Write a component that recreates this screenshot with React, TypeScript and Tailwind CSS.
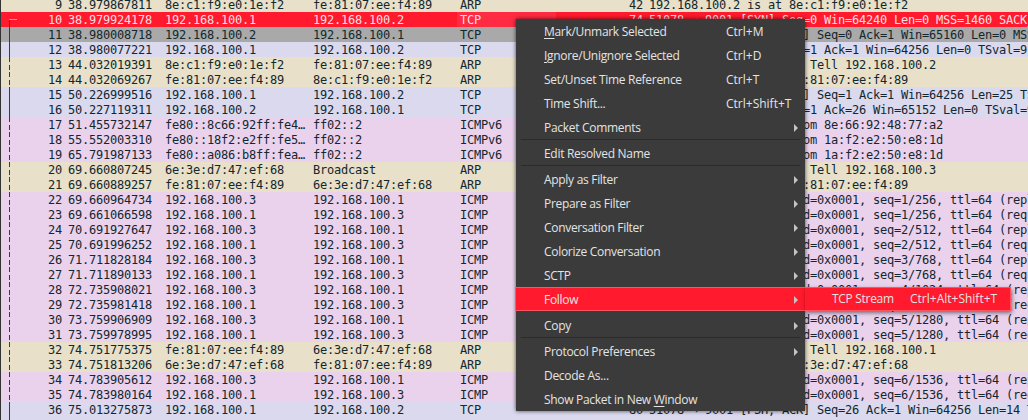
import React from "react";

type Kind = "arp" | "tcp" | "icmp" | "sel" | "gray";
type Packet = [Kind, string, string, string, string, string, string, string];

const packets: Packet[] = [
  ["arp", "9", "38.979867811", "8e:c1:f9:e0:1e:f2", "fe:81:07:ee:f4:89", "ARP", "42", "192.168.100.2 is at 8e:c1:f9:e0:1e:f2"],
  ["sel", "10", "38.979924178", "192.168.100.1", "192.168.100.2", "TCP", "74", "51078 → 9001 [SYN] Seq=0 Win=64240 Len=0 MSS=1460 SACK_PERM"],
  ["gray", "11", "38.980008718", "192.168.100.2", "192.168.100.1", "TCP", "74", "9001 → 51078 [SYN, ACK] Seq=0 Ack=1 Win=65160 Len=0 MSS=1460"],
  ["tcp", "12", "38.980077221", "192.168.100.1", "192.168.100.2", "TCP", "66", "51078 → 9001 [ACK] Seq=1 Ack=1 Win=64256 Len=0 TSval=9"],
  ["arp", "13", "44.032019391", "8e:c1:f9:e0:1e:f2", "fe:81:07:ee:f4:89", "ARP", "42", "Who has 192.168.100.1? Tell 192.168.100.2"],
  ["arp", "14", "44.032069267", "fe:81:07:ee:f4:89", "8e:c1:f9:e0:1e:f2", "ARP", "42", "192.168.100.1 is at fe:81:07:ee:f4:89"],
  ["tcp", "15", "50.226999516", "192.168.100.1", "192.168.100.2", "TCP", "91", "51078 → 9001 [PSH, ACK] Seq=1 Ack=1 Win=64256 Len=25 TSval=9"],
  ["tcp", "16", "50.227119311", "192.168.100.2", "192.168.100.1", "TCP", "66", "9001 → 51078 [ACK] Seq=1 Ack=26 Win=65152 Len=0 TSval=9"],
  ["icmp", "17", "51.455732147", "fe80::8c66:92ff:fe4…", "ff02::2", "ICMPv6", "70", "Router Solicitation from 8e:66:92:48:77:a2"],
  ["icmp", "18", "55.552003310", "fe80::18f2:e2ff:fe5…", "ff02::2", "ICMPv6", "70", "Router Solicitation from 1a:f2:e2:50:e8:1d"],
  ["icmp", "19", "65.791987133", "fe80::a086:b8ff:fea…", "ff02::2", "ICMPv6", "70", "Router Solicitation from 1a:f2:e2:50:e8:1d"],
  ["arp", "20", "69.660807245", "6e:3e:d7:47:ef:68", "Broadcast", "ARP", "42", "Who has 192.168.100.1? Tell 192.168.100.3"],
  ["arp", "21", "69.660889257", "fe:81:07:ee:f4:89", "6e:3e:d7:47:ef:68", "ARP", "42", "192.168.100.1 is at fe:81:07:ee:f4:89"],
  ["icmp", "22", "69.660964734", "192.168.100.3", "192.168.100.1", "ICMP", "98", "Echo (ping) request  id=0x0001, seq=1/256, ttl=64 (reply in 23)"],
  ["icmp", "23", "69.661066598", "192.168.100.1", "192.168.100.3", "ICMP", "98", "Echo (ping) reply    id=0x0001, seq=1/256, ttl=64 (request in 22)"],
  ["icmp", "24", "70.691927647", "192.168.100.3", "192.168.100.1", "ICMP", "98", "Echo (ping) request  id=0x0001, seq=2/512, ttl=64 (reply in 25)"],
  ["icmp", "25", "70.691996252", "192.168.100.1", "192.168.100.3", "ICMP", "98", "Echo (ping) reply    id=0x0001, seq=2/512, ttl=64 (request in 24)"],
  ["icmp", "26", "71.711828184", "192.168.100.3", "192.168.100.1", "ICMP", "98", "Echo (ping) request  id=0x0001, seq=3/768, ttl=64 (reply in 27)"],
  ["icmp", "27", "71.711890133", "192.168.100.1", "192.168.100.3", "ICMP", "98", "Echo (ping) reply    id=0x0001, seq=3/768, ttl=64 (request in 26)"],
  ["icmp", "28", "72.735908021", "192.168.100.3", "192.168.100.1", "ICMP", "98", "Echo (ping) request  id=0x0001, seq=4/1024, ttl=64 (reply in 29)"],
  ["icmp", "29", "72.735981418", "192.168.100.1", "192.168.100.3", "ICMP", "98", "Echo (ping) reply    id=0x0001, seq=4/1024, ttl=64 (request in 28)"],
  ["icmp", "30", "73.759906909", "192.168.100.3", "192.168.100.1", "ICMP", "98", "Echo (ping) request  id=0x0001, seq=5/1280, ttl=64 (reply in 31)"],
  ["icmp", "31", "73.759978995", "192.168.100.1", "192.168.100.3", "ICMP", "98", "Echo (ping) reply    id=0x0001, seq=5/1280, ttl=64 (request in 30)"],
  ["arp", "32", "74.751775375", "fe:81:07:ee:f4:89", "6e:3e:d7:47:ef:68", "ARP", "42", "Who has 192.168.100.3? Tell 192.168.100.1"],
  ["arp", "33", "74.751813206", "6e:3e:d7:47:ef:68", "fe:81:07:ee:f4:89", "ARP", "42", "192.168.100.3 is at 6e:3e:d7:47:ef:68"],
  ["icmp", "34", "74.783905612", "192.168.100.3", "192.168.100.1", "ICMP", "98", "Echo (ping) request  id=0x0001, seq=6/1536, ttl=64 (reply in 35)"],
  ["icmp", "35", "74.783980164", "192.168.100.1", "192.168.100.3", "ICMP", "98", "Echo (ping) reply    id=0x0001, seq=6/1536, ttl=64 (request in 34)"],
  ["tcp", "36", "75.013275873", "192.168.100.1", "192.168.100.2", "TCP", "80", "51078 → 9001 [PSH, ACK] Seq=26 Ack=1 Win=64256 Len=14 TSval=9"],
  ["tcp", "", "", "", "", "", "", ""],
];

const rowStyles: Record<Kind, string> = {
  arp: "bg-[#e8e0c9] text-[#12272e]",
  tcp: "bg-[#dad9ee] text-[#12272e]",
  icmp: "bg-[#ead2ed] text-[#12272e]",
  sel: "bg-[#ff1a2d] text-[#fbdfe0]",
  gray: "bg-[#a9a9a9] text-[#12272e]",
};

// conversation bracket in the first column
const Marker = ({ no, kind }: { no: string; kind: Kind }) => {
  if (no === "9") return null;
  if (kind === "sel") {
    return (
      <svg width="18" height="15" className="absolute left-0 top-0">
        <path d="M16 7.5H8.5V15" fill="none" stroke="#d9a0a8" strokeWidth="1" />
        <path d="M8.5 8V15" fill="none" stroke="#3a3a48" strokeWidth="1" />
      </svg>
    );
  }
  const dashed = kind === "arp" || kind === "icmp";
  return (
    <svg width="18" height="15" className="absolute left-0 top-0">
      <path d="M8.5 0V15" fill="none" stroke="#3a3a48" strokeWidth="1" strokeDasharray={dashed ? "5 3" : undefined} />
    </svg>
  );
};

const PacketRow = ({ p }: { p: Packet }) => {
  const [kind, no, time, src, dst, proto, len, info] = p;
  return (
    <div className={`relative grid h-[15px] grid-cols-[64px_98px_147px_147px_99px_90px_1fr] grid-rows-[15px] leading-[17px] ${rowStyles[kind]}`}>
      <Marker no={no} kind={kind} />
      <div className="pr-[3px] text-right">{no}</div>
      <div className="pl-[3px]">{time}</div>
      <div className="pl-[2px]">{src}</div>
      <div className="pl-[3px]">{dst}</div>
      <div className={`pl-[3px] ${kind === "sel" ? "bg-[#ff2b42]" : ""}`}>{proto}</div>
      <div className="pr-[3px] text-right">{len}</div>
      <div className="overflow-hidden pl-[3px] whitespace-pre">{info}</div>
    </div>
  );
};

const Arrow = () => (
  <svg width="4" height="8" viewBox="0 0 4 8" className="mr-[7px] ml-auto">
    <path d="M0 0L4 4L0 8Z" fill="#c4c4c4" />
  </svg>
);

type MenuItem = { label: React.ReactNode; shortcut?: string; sub?: boolean; active?: boolean };

const Item = ({ label, shortcut, sub, active }: MenuItem) => (
  <div
    className={`flex h-6 items-center pt-px pl-[28px] ${
      active ? "relative z-10 -mx-px border border-[#ff5563] bg-[#ff1a2d]" : ""
    }`}
  >
    <span className="w-[182px] tracking-[-0.3px] whitespace-nowrap">{label}</span>
    {shortcut && <span className="whitespace-nowrap">{shortcut}</span>}
    {sub && <Arrow />}
  </div>
);

const Sep = ({ hidden }: { hidden?: boolean }) => (
  <div className="h-[2px] px-[5px]">{!hidden && <div className="h-px bg-[#2b2b2b]" />}</div>
);

const ContextMenu = () => (
  <div className="absolute top-[19px] left-[516px] h-[392px] w-[289px] bg-[#3b3b3b] font-['Open_Sans',sans-serif] text-[12px] text-[#e4e4e4] shadow-[0_0_4px_rgba(0,0,0,0.7)]">
    <Item label={<><span className="underline underline-offset-2">M</span>ark/Unmark Selected</>} shortcut="Ctrl+M" />
    <Item label={<><span className="underline underline-offset-2">I</span>gnore/Unignore Selected</>} shortcut="Ctrl+D" />
    <Item label="Set/Unset Time Reference" shortcut="Ctrl+T" />
    <Item label="Time Shift..." shortcut="Ctrl+Shift+T" />
    <Item label="Packet Comments" sub />
    <Sep />
    <Item label="Edit Resolved Name" />
    <Sep />
    <Item label="Apply as Filter" sub />
    <Item label="Prepare as Filter" sub />
    <Item label="Conversation Filter" sub />
    <Item label="Colorize Conversation" sub />
    <Item label="SCTP" sub />
    <div className="relative">
      <Item label="Follow" sub active />
      {/* submenu */}
      <div className="absolute top-0 left-full z-20 flex h-6 w-[206px] items-center border border-l-0 border-[#ff5563] bg-[#ff1a2d] pl-[27px] whitespace-nowrap shadow-[1px_2px_4px_rgba(0,0,0,0.5)]">
        <span className="w-[78px] tracking-[-0.3px]">TCP Stream</span>
        <span>Ctrl+Alt+Shift+T</span>
      </div>
    </div>
    <Sep hidden />
    <Item label="Copy" sub />
    <Sep />
    <Item label="Protocol Preferences" sub />
    <Item label="Decode As..." />
    <Item label={<>Show Packet in New <span className="underline underline-offset-2">W</span>indow</>} />
  </div>
);

export default function App() {
  return (
    <div className="relative h-[420px] w-[1028px] overflow-hidden bg-[#dad9ee]">
      <div className="-mt-[3px] border-l border-[#333333] font-['DejaVu_Sans_Mono',monospace] text-[12px] tracking-[-0.224px]">
        {packets.map((p, i) => (
          <PacketRow key={i} p={p} />
        ))}
      </div>
      <ContextMenu />
    </div>
  );
}
